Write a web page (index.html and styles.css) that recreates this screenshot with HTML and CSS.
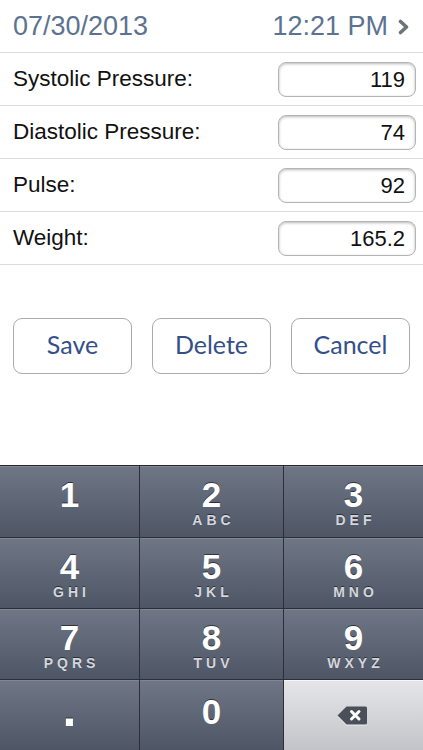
FILE: index.html
```html
<!DOCTYPE html>
<html>
<head>
<meta charset="utf-8">
<link rel="stylesheet" href="styles.css">
</head>
<body>
<div class="screen">
  <div class="header">
    <span class="date">07/30/2013</span>
    <span class="time">12:21 PM<svg class="chev" width="12" height="16" viewBox="0 0 12 16"><path d="M2.5 2.5 L8.5 8 L2.5 13.5" fill="none" stroke="#6f7378" stroke-width="3.6" stroke-linecap="round" stroke-linejoin="round"/></svg></span>
  </div>
  <div class="row"><span class="label">Systolic Pressure:</span><div class="field">119</div></div>
  <div class="row"><span class="label">Diastolic Pressure:</span><div class="field">74</div></div>
  <div class="row"><span class="label">Pulse:</span><div class="field">92</div></div>
  <div class="row"><span class="label">Weight:</span><div class="field">165.2</div></div>
  <div class="buttons">
    <div class="btn">Save</div>
    <div class="btn">Delete</div>
    <div class="btn">Cancel</div>
  </div>
  <div class="keyboard">
    <div class="key"><span class="digit">1</span></div>
    <div class="key"><span class="digit">2</span><span class="letters">ABC</span></div>
    <div class="key"><span class="digit">3</span><span class="letters">DEF</span></div>
    <div class="key"><span class="digit">4</span><span class="letters">GHI</span></div>
    <div class="key"><span class="digit">5</span><span class="letters">JKL</span></div>
    <div class="key"><span class="digit">6</span><span class="letters">MNO</span></div>
    <div class="key"><span class="digit">7</span><span class="letters">PQRS</span></div>
    <div class="key"><span class="digit">8</span><span class="letters">TUV</span></div>
    <div class="key"><span class="digit">9</span><span class="letters">WXYZ</span></div>
    <div class="key"><span class="dot">.</span></div>
    <div class="key"><span class="digit zero">0</span></div>
    <div class="key light">
      <svg class="bksp" width="31" height="21" viewBox="0 0 31 21">
        <path d="M0.5 10.5 L9.5 1.5 H28.5 a1.5 1.5 0 0 1 1.5 1.5 V18 a1.5 1.5 0 0 1 -1.5 1.5 H9.5 Z" fill="#ffffff" opacity="0.7" transform="translate(0,1)"/>
        <path d="M0.5 10.5 L9.5 1.5 H28.5 a1.5 1.5 0 0 1 1.5 1.5 V18 a1.5 1.5 0 0 1 -1.5 1.5 H9.5 Z" fill="#4a4f5a"/>
        <path d="M14.5 6.5 L22 14 M22 6.5 L14.5 14" stroke="#ffffff" stroke-width="3" stroke-linecap="round"/>
      </svg>
    </div>
  </div>
</div>
</body>
</html>
```

FILE: styles.css
```css
html, body {
  margin: 0;
  padding: 0;
  background: #ffffff;
}
.screen {
  width: 423px;
  height: 750px;
  display: flex;
  flex-direction: column;
  font-family: "Liberation Sans", sans-serif;
  overflow: hidden;
}
.header {
  height: 52px;
  display: flex;
  align-items: center;
  justify-content: space-between;
  padding: 0 13px 0 13px;
  border-bottom: 1px solid #dcdcdc;
  color: #5c7390;
  font-size: 27px;
}
.time {
  display: flex;
  align-items: center;
}
.chev {
  margin-left: 10px;
  margin-top: 1px;
}
.row {
  height: 52px;
  display: flex;
  align-items: center;
  justify-content: space-between;
  padding: 0 7px 0 13px;
  border-bottom: 1px solid #dcdcdc;
}
.label {
  font-size: 22.5px;
  color: #111111;
}
.field {
  width: 126px;
  height: 33px;
  border: 1px solid #b4b4b4;
  border-radius: 8px;
  box-shadow: inset 0 1px 3px rgba(0, 0, 0, 0.28);
  text-align: right;
  padding-right: 10px;
  font-size: 22px;
  line-height: 33px;
  color: #111111;
}
.buttons {
  display: flex;
  gap: 20px;
  padding: 0 13px;
  margin-top: 53px;
}
.btn {
  width: 117px;
  height: 54px;
  border: 1px solid #ababab;
  border-radius: 9px;
  display: flex;
  align-items: center;
  justify-content: center;
  font-family: Lato, "Liberation Sans", sans-serif;
  font-size: 25px;
  line-height: 25px;
  padding-bottom: 3px;
  box-sizing: border-box;
  height: 56px;
  width: 119px;
  color: #34508a;
}
.keyboard {
  margin-top: auto;
  height: 284px;
  border-top: 1px solid #26282d;
  background: #2c2f35;
  display: grid;
  grid-template-columns: 139px 143px 139px;
  grid-template-rows: 71px 70px 70px 70px;
  gap: 1px;
}
.key {
  background: linear-gradient(#6f7685, #4e5565);
  box-shadow: inset 0 1px 0 rgba(255, 255, 255, 0.12);
  display: flex;
  flex-direction: column;
  align-items: center;
  color: #ffffff;
  font-weight: bold;
}
.digit {
  font-size: 35px;
  line-height: 34px;
  margin-top: 12px;
  text-shadow: 0 -1px 0 rgba(0, 0, 0, 0.55);
}
.zero {
  margin-top: 15px;
}
.letters {
  font-size: 14px;
  line-height: 14px;
  margin-top: 1px;
  letter-spacing: 4px;
  padding-left: 4px;
  color: #d4d7dd;
  text-shadow: 0 -1px 0 rgba(0, 0, 0, 0.5);
}
.dot {
  font-size: 50px;
  line-height: 50px;
  margin-top: 4px;
  text-shadow: 0 -1px 0 rgba(0, 0, 0, 0.55);
}
.key.light {
  background: linear-gradient(#e6e6e9, #c3c4c9);
  box-shadow: inset 0 1px 0 rgba(255, 255, 255, 0.6);
  justify-content: center;
}
.bksp {
  margin-left: -2px;
}
```
